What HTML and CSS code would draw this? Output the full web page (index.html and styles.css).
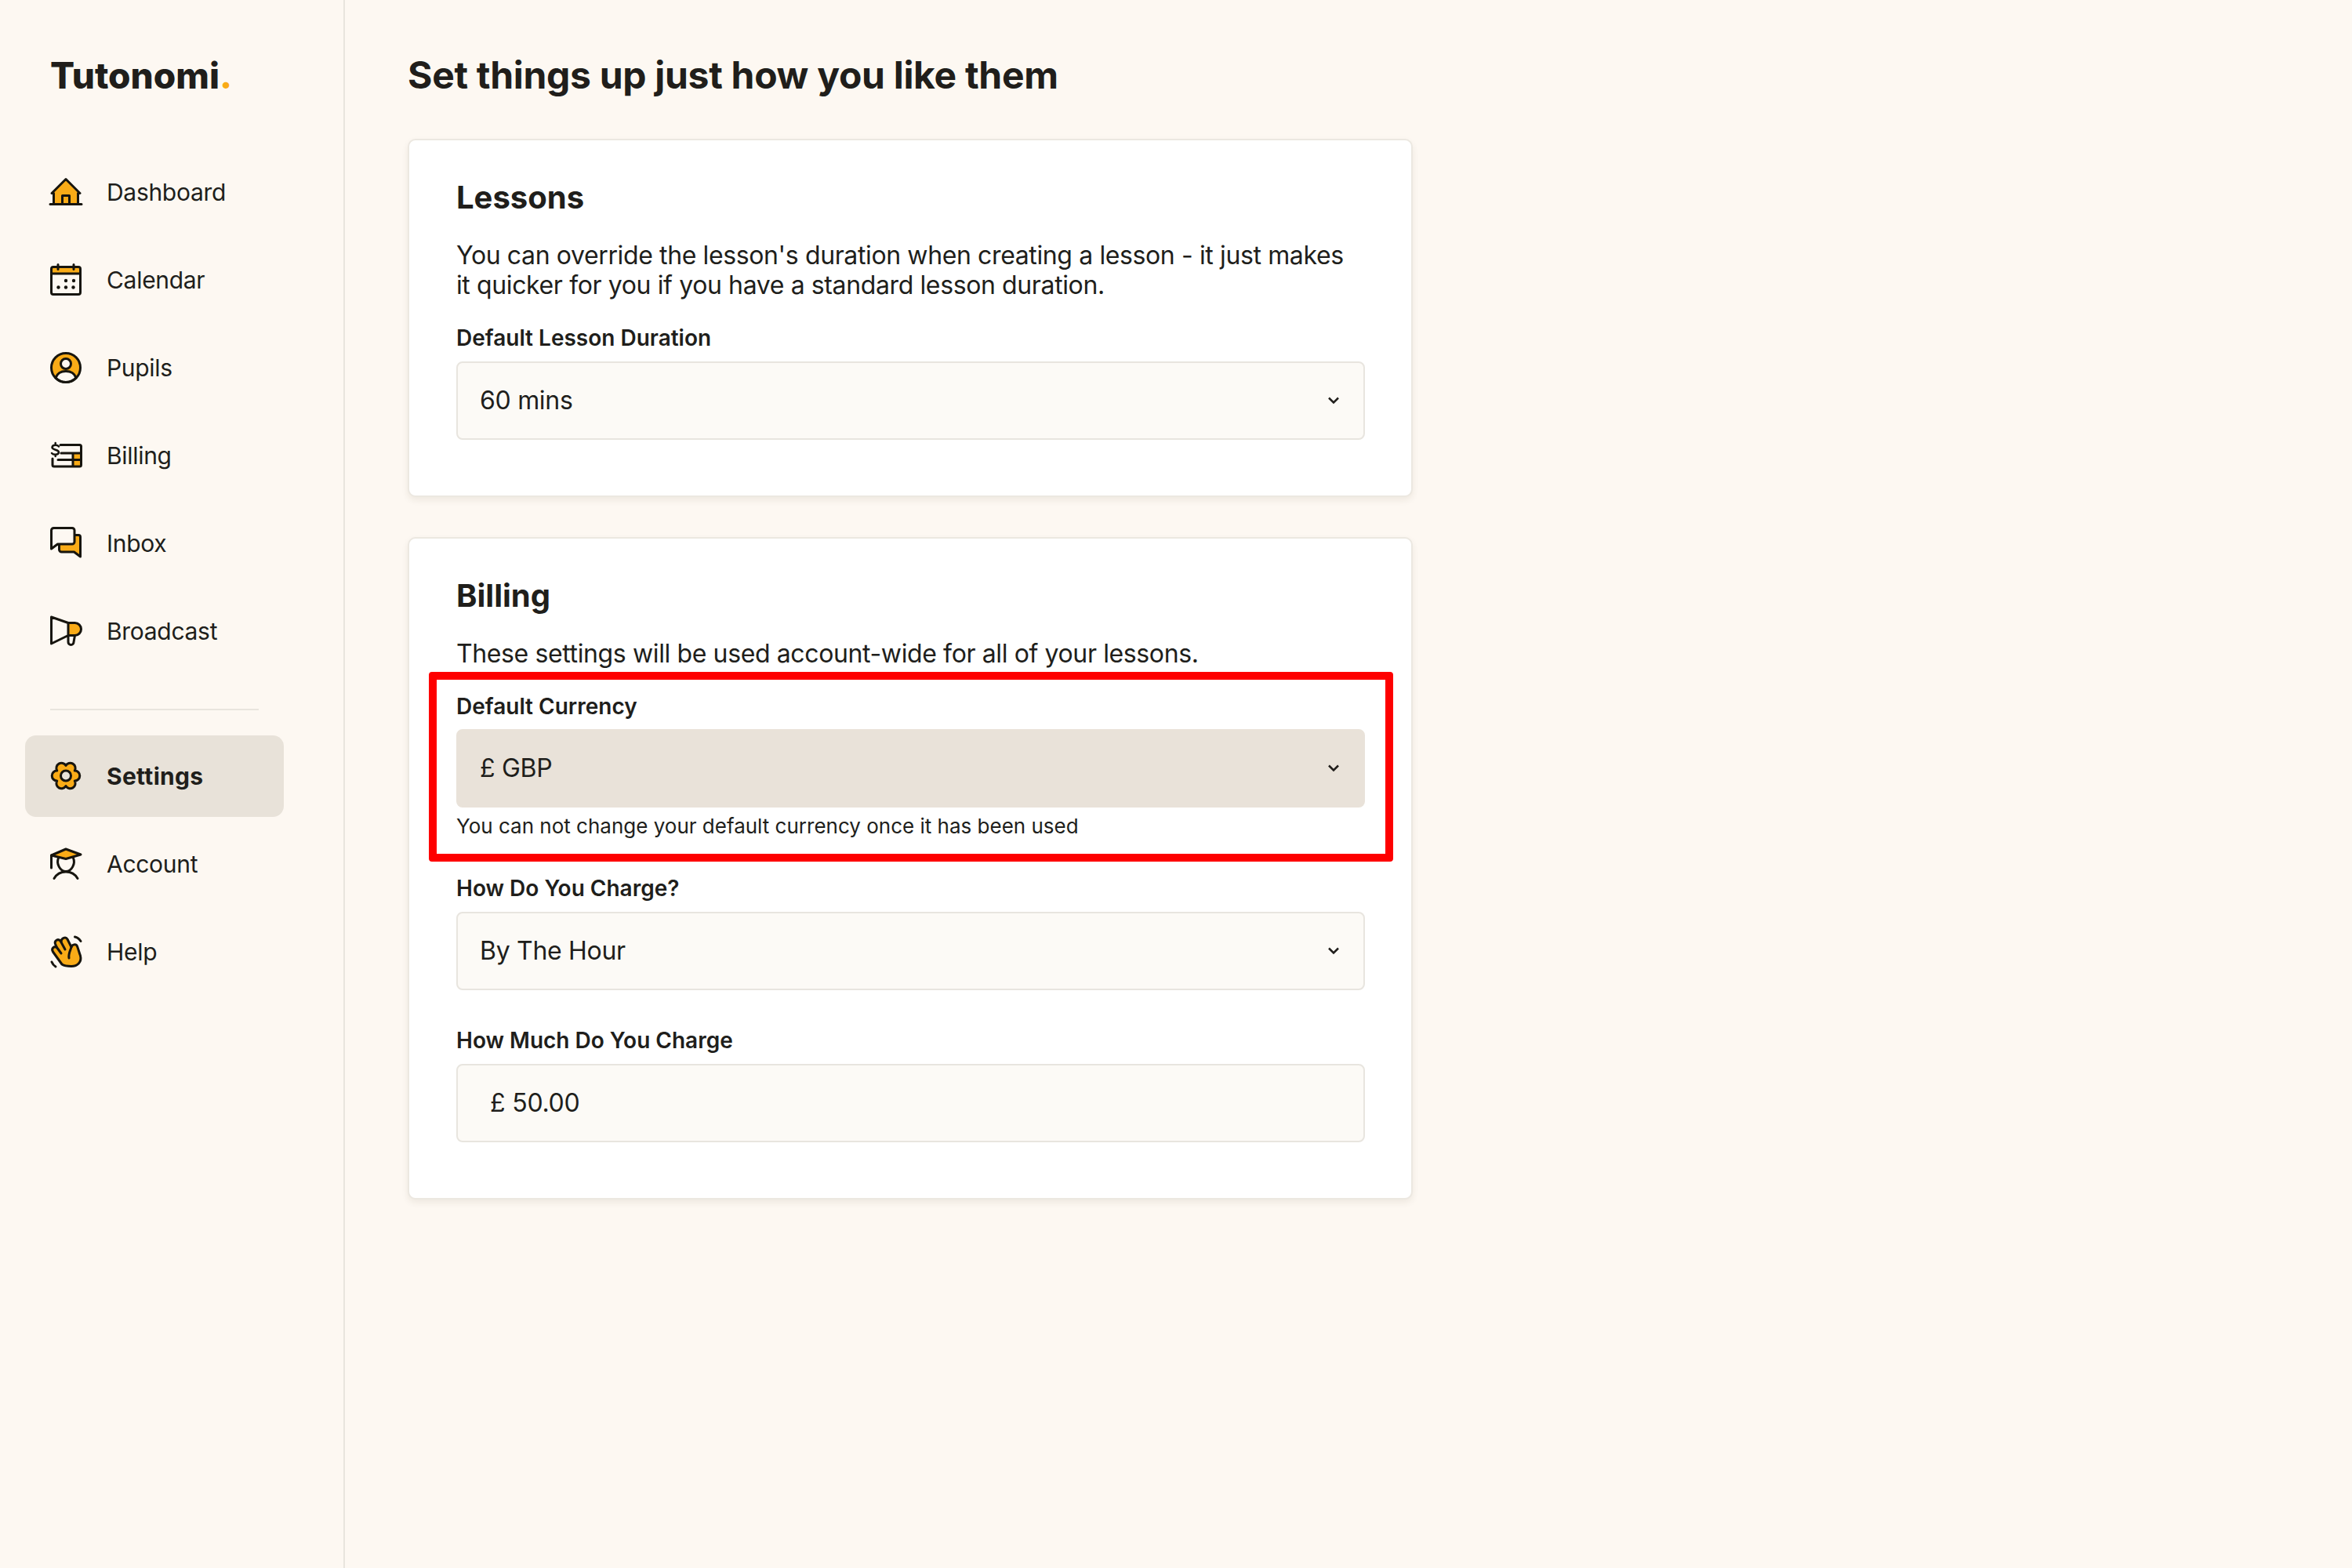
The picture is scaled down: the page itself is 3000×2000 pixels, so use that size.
FILE: index.html
```html
<!DOCTYPE html>
<html lang="en">
<head>
    <meta charset="UTF-8">
    <title>Tutonomi Settings</title>
    <link rel="stylesheet" href="styles.css">
</head>
<body>
    <aside class="sidebar">
        <div class="logo">Tutonomi<span class="logo-dot">.</span></div>
        <nav class="nav">
            <a class="nav-item">
                <svg class="icon" viewBox="0 0 40 40"><path class="fill" d="M20 3.5 3 21.5h1.500V35h31V21.500H37z"/><path class="line" d="M4.500 35V21.500H2L20 3.500l18 18h-2.500V35M0 35.500h40M15.500 35V24.500h9V35"/></svg>
                <span>Dashboard</span>
            </a>
            <a class="nav-item">
                <svg class="icon" viewBox="0 0 40 40"><rect class="fill" x="2" y="3" width="36" height="9"/><rect class="line" x="1.500" y="3.500" width="37" height="35" rx="2.500"/><path class="line" d="M1.500 12h37M10 .5v6M30 .5v6"/><g class="dots"><circle cx="20" cy="21" r="2.200"/><circle cx="30" cy="21" r="2.200"/><circle cx="10.500" cy="29.500" r="2.200"/><circle cx="20" cy="29.500" r="2.200"/><circle cx="29.500" cy="29.500" r="2.200"/></g></svg>
                <span>Calendar</span>
            </a>
            <a class="nav-item">
                <svg class="icon" viewBox="0 0 40 40"><circle class="fill" cx="20" cy="20" r="18.500"/><path class="blank line" d="M7 33c2-6 7-8.500 13-8.500S31 27 33 33c-3.500 3.500-8 5.500-13 5.500S10.500 36.500 7 33z"/><circle class="blank line" cx="20" cy="15" r="6.500"/><circle class="line" cx="20" cy="20" r="18.500"/></svg>
                <span>Pupils</span>
            </a>
            <a class="nav-item">
                <svg class="icon" viewBox="0 0 40 40"><rect class="fill" x="29" y="17" width="9" height="17"/><path class="line" d="M13 6.500h24.500a2 2 0 0 1 2 2V32a2 2 0 0 1-2 2H5a2 2 0 0 1-2-2v-8M14 17h25M10 25.500h29M29 17v17"/><path class="line thin" d="M11 8.500C9 6 3 6 2.500 9.500 2.500 13.500 11 12 11 16c-.5 3.500-7 3.500-9 1M6.700 4v2M6.700 19v2"/></svg>
                <span>Billing</span>
            </a>
            <a class="nav-item">
                <svg class="icon" viewBox="0 0 40 40"><path class="fill" d="M31 9.500h5a2.500 2.500 0 0 1 2.500 2.500v25l-8-6H14.500c-2 0-3.500-1-4.500-4v-6h18a3 3 0 0 0 3-3z"/><path class="line" d="M1.500 27V3.500a3 3 0 0 1 3-3H28a3 3 0 0 1 3 3V18a3 3 0 0 1-3 3H9.500zM31 9.500h5a2.500 2.500 0 0 1 2.500 2.500v25l-8-6H14.500a3 3 0 0 1-3-3v-7"/></svg>
                <span>Inbox</span>
            </a>
            <a class="nav-item">
                <svg class="icon" viewBox="0 0 40 40"><path class="fill" d="M23 9.500h8.500a8 8 0 0 1 0 16H23z"/><path class="line" d="M1.500 2v34L23 25.500h8.500a8 8 0 0 0 0-16H23zM23 9.500v16M23 26v8a3.500 3.500 0 0 0 7 0l1.500-8.500"/></svg>
                <span>Broadcast</span>
            </a>
            <hr class="nav-divider">
            <a class="nav-item active">
                <svg class="icon" viewBox="0 0 40 40"><path class="fill line" d="M20 6.500A6.500 6.500 0 0 1 31.260 13 6.500 6.500 0 0 1 31.260 26 6.500 6.500 0 0 1 20 32.500 6.500 6.500 0 0 1 8.740 26 6.500 6.500 0 0 1 8.740 13 6.500 6.500 0 0 1 20 6.500z"/><circle class="hole line" cx="20" cy="19.500" r="6.500"/></svg>
                <span>Settings</span>
            </a>
            <a class="nav-item">
                <svg class="icon" viewBox="0 0 40 40"><path class="fill line" d="M20 1 39 8 20 13.500 1.500 9z"/><path class="line" d="M1.500 9v16M10.500 12.500c-3 7 2 17 9.500 17s12.500-10 9.500-17M5 38.500c4-7 9.500-8.500 15-8.500s11 1.500 15 8.500"/></svg>
                <span>Account</span>
            </a>
            <a class="nav-item">
                <svg class="icon" viewBox="0 0 40 40"><path class="fill line" d="M15 36 3.500 20C1 16 5 12 8.500 14.500L6.500 10C5 5.500 10 3 13 6l1 1.500C14 2 20 .5 22 4l5 10c1-3.500 6-4.500 7.500-1 1.500 4 2.500 8 4 12 2 8-3.500 13.500-11.500 13.500-5 0-9-.5-12-2.500z"/><path class="line" d="M8.500 14.500 14 22M13 6l6 11M27 14c-1 4-4 8-3 14M31.500 1c3 .5 5.500 2.500 7.500 5.500M2 33c1 2.500 2.500 4.500 5 6"/></svg>
                <span>Help</span>
            </a>
        </nav>
    </aside>

    <main class="content">
        <h1>Set things up just how you like them</h1>

        <section class="card">
            <h2>Lessons</h2>
            <p class="intro">You can override the lesson's duration when creating a lesson - it just makes it quicker for you if you have a standard lesson duration.</p>
            <label class="field-label">Default Lesson Duration</label>
            <div class="select-wrap">
                <select class="control"><option>60 mins</option></select>
                <svg class="chevron" viewBox="0 0 14 10"><path d="M1 1.500l6 6 6-6"/></svg>
            </div>
        </section>

        <section class="card">
            <h2>Billing</h2>
            <p class="intro tight">These settings will be used account-wide for all of your lessons.</p>
            <div class="highlight">
                <label class="field-label">Default Currency</label>
                <div class="select-wrap">
                    <select class="control disabled"><option>£ GBP</option></select>
                    <svg class="chevron" viewBox="0 0 14 10"><path d="M1 1.500l6 6 6-6"/></svg>
                </div>
                <p class="help-text">You can not change your default currency once it has been used</p>
            </div>
            <label class="field-label after-highlight">How Do You Charge?</label>
            <div class="select-wrap">
                <select class="control"><option>By The Hour</option></select>
                <svg class="chevron" viewBox="0 0 14 10"><path d="M1 1.500l6 6 6-6"/></svg>
            </div>
            <label class="field-label spaced">How Much Do You Charge</label>
            <div class="control money">
                <span class="currency">£</span>
                <input class="money-input" type="text" value="50.00">
            </div>
        </section>
    </main>
</body>
</html>
```

FILE: styles.css
```css
* {
    box-sizing: border-box;
}
body {
    font-family: Inter, "Liberation Sans", sans-serif;
    background-color: #fdf8f2;
    color: #201e1b;
    margin: 0;
    height: 100vh;
    display: flex;
}
.sidebar {
    width: 440px;
    flex-shrink: 0;
    border-right: 2px solid #e9e5de;
    padding: 66px 0 0 32px;
}
.logo {
    font-size: 46px;
    font-weight: 800;
    line-height: 60px;
    margin-left: 32px;
    margin-bottom: 67px;
}
.logo-dot {
    color: #f9ab17;
}
.nav {
    width: 330px;
    display: flex;
    flex-direction: column;
    gap: 8px;
}
.nav-item {
    height: 104px;
    padding-left: 32px;
    display: flex;
    align-items: center;
    gap: 32px;
    font-size: 30px;
    letter-spacing: -0.3px;
    border-radius: 14px;
}
.nav-item.active {
    background-color: #e8e2d9;
    font-weight: 700;
    letter-spacing: 0.3px;
}
.nav-divider {
    width: 266px;
    height: 2px;
    margin: 39px 0 24px 32px;
    border: none;
    background-color: #e9e5de;
}
.icon {
    width: 40px;
    height: 40px;
    flex-shrink: 0;
    overflow: visible;
}
.icon .fill {
    fill: #f9ab17;
}
.icon .line {
    stroke: #17150f;
    stroke-width: 3;
    stroke-linejoin: round;
    stroke-linecap: round;
}
.icon path.line:not(.fill):not(.blank),
.icon rect.line,
.icon circle.line:not(.blank):not(.hole) {
    fill: none;
}
.icon .thin {
    stroke-width: 2.500;
}
.icon .blank {
    fill: #fdf8f2;
}
.icon .hole {
    fill: #e8e2d9;
}
.icon .dots {
    fill: #17150f;
}
.content {
    flex: 1;
    padding: 66px 0 0 80px;
}
h1 {
    margin: 0 0 51px;
    font-size: 48px;
    line-height: 60px;
    font-weight: 700;
    letter-spacing: -0.3px;
}
.card {
    width: 1282px;
    background: white;
    border: 2px solid #ece8e1;
    border-radius: 10px;
    box-shadow: 0 4px 8px rgba(60,50,30,0.08);
    padding: 48px 59px 71px 60px;
    margin-bottom: 51px;
}
h2 {
    margin: 0;
    font-size: 40px;
    line-height: 50px;
    font-weight: 700;
}
.intro {
    max-width: 1145px;
    margin: 30px 0 31px;
    font-size: 32px;
    line-height: 38px;
    letter-spacing: -0.38px;
}
.intro.tight {
    margin-bottom: 4px;
}
.field-label {
    display: block;
    font-size: 28px;
    line-height: 34px;
    font-weight: 600;
    margin-bottom: 13px;
}
.field-label.spaced {
    margin-top: 47px;
}
.field-label.after-highlight {
    margin-top: 17px;
}
.select-wrap {
    position: relative;
}
.control {
    display: block;
    width: 100%;
    height: 100px;
    padding: 0 28px 2px;
    border: 2px solid #e8e5df;
    border-radius: 8px;
    background-color: #fcfaf6;
    font-family: inherit;
    font-size: 32px;
    letter-spacing: -0.3px;
    color: #201e1b;
    appearance: none;
}
.control.disabled {
    background-color: #e9e2d9;
    border-color: #e9e2d9;
}
.chevron {
    position: absolute;
    right: 33px;
    top: 45px;
    width: 14px;
    height: 10px;
    fill: none;
    stroke: #201e1b;
    stroke-width: 2.500;
}
.highlight {
    margin: 0 -36px 0 -35px;
    padding: 17px 26px 19px 25px;
    border: 10px solid #fe0000;
    border-radius: 4px;
}
.highlight .field-label {
    margin-bottom: 12px;
}
.help-text {
    margin: 8px 0 0;
    font-size: 26px;
    line-height: 32px;
}
.money {
    display: flex;
    align-items: center;
    gap: 9px;
    padding-left: 41px;
}
.money-input {
    flex: 1;
    border: none;
    background: transparent;
    font-family: inherit;
    font-size: 32px;
    letter-spacing: -0.3px;
    color: #201e1b;
    padding: 0;
}
```
